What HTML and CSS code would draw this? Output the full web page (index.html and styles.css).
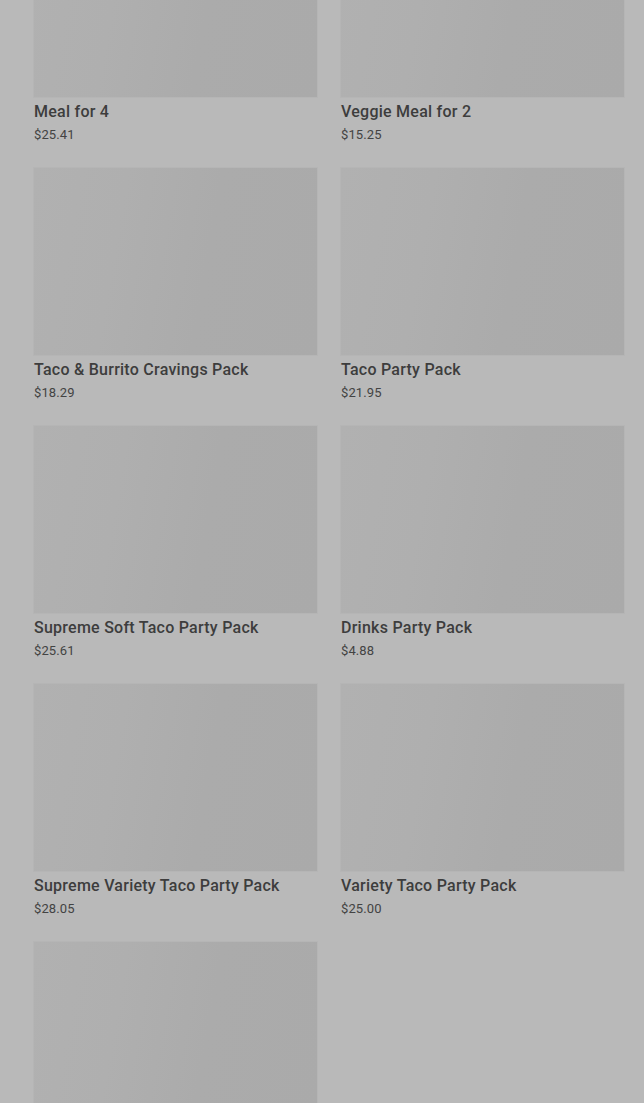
FILE: index.html
```html
<!DOCTYPE html>
<html>
<head>
<meta charset="utf-8">
<link rel="stylesheet" href="styles.css">
</head>
<body>
<main class="page">
  <div class="grid">
    <div class="card"><div class="thumb"></div><div class="name">Meal for 4</div><div class="price">$25.41</div></div>
    <div class="card"><div class="thumb"></div><div class="name">Veggie Meal for 2</div><div class="price">$15.25</div></div>
    <div class="card"><div class="thumb"></div><div class="name">Taco &amp; Burrito Cravings Pack</div><div class="price">$18.29</div></div>
    <div class="card"><div class="thumb"></div><div class="name">Taco Party Pack</div><div class="price">$21.95</div></div>
    <div class="card"><div class="thumb"></div><div class="name">Supreme Soft Taco Party Pack</div><div class="price">$25.61</div></div>
    <div class="card"><div class="thumb"></div><div class="name">Drinks Party Pack</div><div class="price">$4.88</div></div>
    <div class="card"><div class="thumb"></div><div class="name">Supreme Variety Taco Party Pack</div><div class="price">$28.05</div></div>
    <div class="card"><div class="thumb"></div><div class="name">Variety Taco Party Pack</div><div class="price">$25.00</div></div>
    <div class="card"><div class="thumb"></div></div>
  </div>
</main>
</body>
</html>
```
FILE: styles.css
```css
html, body {
  margin: 0;
  padding: 0;
  background: #b9b9b9;
  height: 1103px;
  overflow: hidden;
}
.page {
  padding: 0 20px 0 34px;
  font-family: Roboto, "Noto Sans", sans-serif;
}
.grid {
  margin-top: -90px;
  display: grid;
  grid-template-columns: 283px 283px;
  column-gap: 24px;
  row-gap: 24px;
}
.card {
  display: flex;
  flex-direction: column;
}
.thumb {
  height: 187px;
  background: linear-gradient(100deg, #b1b1b1 0%, #afafaf 30%, #ababab 60%, #aaaaaa 100%);
  box-shadow: 0 0 0 1px #b5b5b5;
}
.name {
  margin-top: 5px;
  font-size: 16px;
  line-height: 20px;
  font-weight: 500;
  letter-spacing: 0.25px;
  color: #3d3d3d;
  white-space: nowrap;
}
.price {
  margin-top: 4px;
  font-size: 13px;
  line-height: 18px;
  letter-spacing: 0.1px;
  color: #434343;
}
```
